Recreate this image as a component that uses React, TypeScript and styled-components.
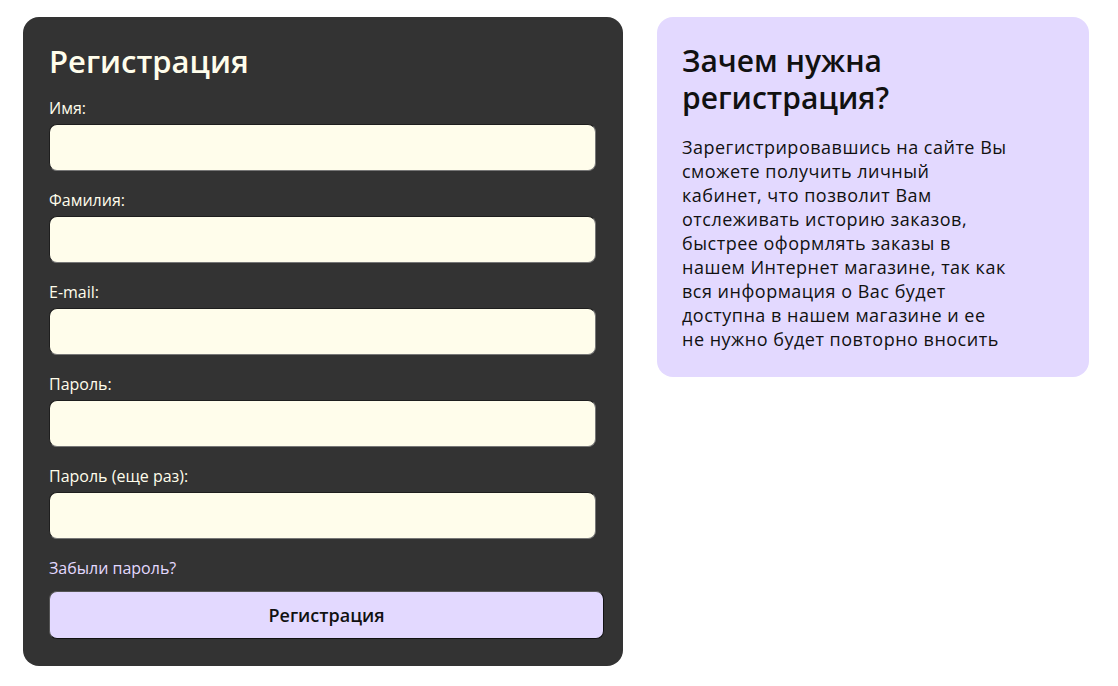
import React from "react";
import styled, { createGlobalStyle } from "styled-components";

const GlobalStyle = createGlobalStyle`
  body {
    margin: 0;
    background: #ffffff;
    font-family: "Open Sans", "Noto Sans", sans-serif;
  }
`;

const Page = styled.div`
  display: flex;
  align-items: flex-start;
  gap: 34px;
  padding: 17px 23px;
`;

const FormCard = styled.form`
  box-sizing: border-box;
  width: 600px;
  height: 649px;
  padding: 26px 19px 26px 26px;
  background: #333333;
  border-radius: 16px;
  display: flex;
  flex-direction: column;
`;

const Title = styled.h1`
  margin: 0 0 19px;
  font-size: 31px;
  line-height: 37px;
  font-weight: 600;
  color: #fffdeb;
`;

const Field = styled.div`
  display: flex;
  flex-direction: column;
  margin-bottom: 20px;
`;

const Label = styled.label`
  font-size: 16px;
  line-height: 18px;
  font-weight: 400;
  color: #fffdeb;
  margin-bottom: 7px;
`;

const Input = styled.input`
  box-sizing: border-box;
  width: 547px;
  height: 47px;
  background: #fffdeb;
  border: 1px solid #1e1e1e;
  border-bottom-color: #777;
  border-right-color: #777;
  border-radius: 8px;
  outline: none;
  padding: 0 12px;
  font-family: inherit;
  font-size: 16px;
`;

const Forgot = styled.a`
  font-size: 16px;
  line-height: 18px;
  color: #e3d9ff;
  text-decoration: none;
  margin-bottom: 14px;
`;

const Submit = styled.button`
  box-sizing: border-box;
  width: 555px;
  height: 48px;
  background: #e3d9ff;
  border: 1px solid #111;
  border-top-color: #555;
  border-left-color: #555;
  border-radius: 8px;
  font-family: inherit;
  font-size: 18px;
  font-weight: 600;
  color: #111;
  cursor: pointer;
`;

const InfoCard = styled.aside`
  box-sizing: border-box;
  width: 432px;
  padding: 25px 25px 26px;
  background: #e3d9ff;
  border-radius: 16px;
`;

const InfoTitle = styled.h2`
  margin: 0 0 19px;
  width: 340px;
  font-size: 30px;
  line-height: 37px;
  font-weight: 600;
  color: #111;
`;

const InfoText = styled.p`
  margin: 0;
  width: 330px;
  font-size: 18px;
  line-height: 24px;
  letter-spacing: 0.5px;
  color: #111;
`;

const fields = ["Имя:", "Фамилия:", "E-mail:", "Пароль:", "Пароль (еще раз):"];

export default function App() {
  return (
    <>
      <GlobalStyle />
      <Page>
        <FormCard onSubmit={(e) => e.preventDefault()}>
          <Title>Регистрация</Title>
          {fields.map((f, i) => (
            <Field key={f}>
              <Label htmlFor={"f" + i}>{f}</Label>
              <Input id={"f" + i} type={i > 2 ? "password" : "text"} />
            </Field>
          ))}
          <Forgot href="#">Забыли пароль?</Forgot>
          <Submit type="submit">Регистрация</Submit>
        </FormCard>
        <InfoCard>
          <InfoTitle>Зачем нужна регистрация?</InfoTitle>
          <InfoText>
            Зарегистрировавшись на сайте Вы сможете получить личный кабинет, что
            позволит Вам отслеживать историю заказов, быстрее оформлять заказы в
            нашем Интернет магазине, так как вся информация о Вас будет доступна
            в нашем магазине и ее не нужно будет повторно вносить
          </InfoText>
        </InfoCard>
      </Page>
    </>
  );
}
